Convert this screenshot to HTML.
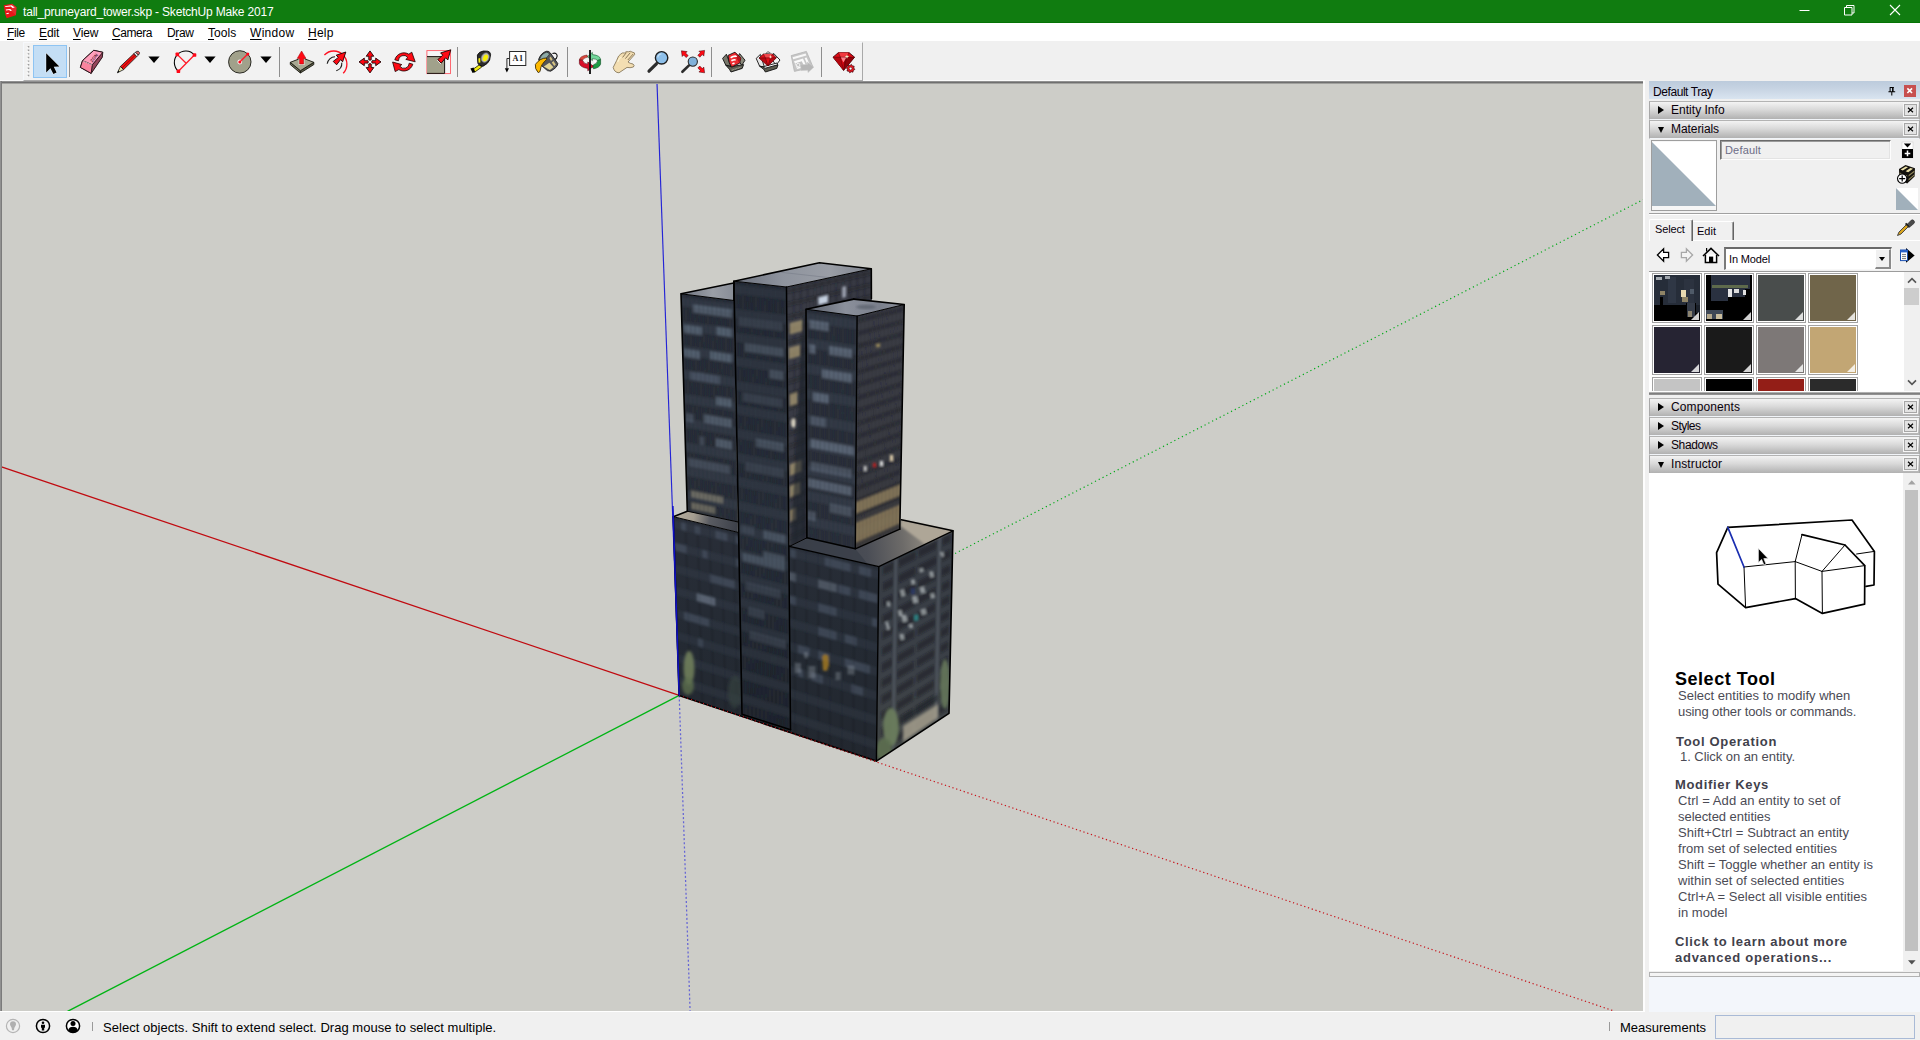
<!DOCTYPE html>
<html>
<head>
<meta charset="utf-8">
<title>tall_pruneyard_tower.skp - SketchUp Make 2017</title>
<style>
html,body{margin:0;padding:0;}
body{width:1920px;height:1040px;overflow:hidden;background:#f0f0f0;position:relative;font-family:"Liberation Sans",sans-serif;font-size:12px;color:#000;}
.abs{position:absolute;}
.t{position:absolute;white-space:nowrap;line-height:14px;font-size:12px;}
#titlebar{left:0;top:0;width:1920px;height:23px;background:#107c10;box-shadow:inset 0 -1px 0 #057405;}
#menubar{left:0;top:23px;width:1920px;height:18px;background:#fff;}
#menubar .t{color:#000;}
#menubar u{text-decoration:underline;text-decoration-thickness:1px;text-underline-offset:1.5px;}
#toolbar{left:23px;top:42px;width:838px;height:37px;background:#f2f2f2;border-top:1px solid #f7f8fb;border-left:1px solid #f5f8fc;border-right:1px solid #a9a9a9;border-bottom:1px solid #acacac;box-sizing:content-box;}
.sep{position:absolute;top:47px;width:1px;height:30px;background:#8e8e8e;}
.dd{position:absolute;top:58px;width:0;height:0;border-left:4.5px solid transparent;border-right:4.5px solid transparent;border-top:5px solid #000;}
#vp{left:0;top:81px;width:1645px;height:931px;background:#cdcdc8;overflow:hidden;}
#status{left:0;top:1012px;width:1920px;height:28px;background:#f0f0f0;}
.bar{position:absolute;left:1649px;width:269px;height:17px;border-left:1px solid #a8a8a8;border-right:1px solid #a8a8a8;border-top:1px solid #b3b3b3;border-bottom:1px solid #f1f4f8;box-sizing:content-box;background:linear-gradient(#f3f3f3 0,#d9d9d9 45%,#b1b1b1 100%);}
.bar .t{left:21px;top:1px;color:#0a000a;}
.bar .x{position:absolute;left:254px;top:1.5px;width:10.5px;height:10px;border:1px solid #a7a7a7;background:#e3e3e3;outline:1px solid #f6f6f6;}
.bar .x svg{position:absolute;left:2px;top:2.5px;}
.tri-r{position:absolute;left:8px;top:4px;width:0;height:0;border-top:4.5px solid transparent;border-bottom:4.5px solid transparent;border-left:6px solid #000;}
.tri-d{position:absolute;left:7.5px;top:5.5px;width:0;height:0;border-left:3.7px solid transparent;border-right:3.7px solid transparent;border-top:6.5px solid #000;}
.sw{position:absolute;width:46px;height:46px;border:1px solid #fff;outline:1px solid #a2a2a2;overflow:hidden;}
.sw i{position:absolute;right:1px;bottom:1px;width:0;height:0;border-left:8px solid transparent;border-bottom:8px solid rgba(255,255,255,.82);}
.ins{position:absolute;white-space:nowrap;font-size:13px;line-height:16px;color:#4b4b55;left:1678px;}
.insb{position:absolute;white-space:nowrap;font-size:13px;line-height:16px;color:#41414b;font-weight:bold;left:1675px;}
svg{position:absolute;overflow:visible;}
</style>
</head>
<body>

<!-- TITLE BAR -->
<div id="titlebar" class="abs">
  <svg style="left:0;top:0" width="22" height="23" viewBox="0 0 22 23">
    <path d="M3.7 5.2 L12 3.7 L16.4 7.15 L15.9 15.2 L6.7 18.2 L5.3 14.8 Z" fill="#e81418"/>
    <path d="M12 3.7 L16.4 7.15 L15.9 15.2 L11.2 11 Z" fill="#e42a2c"/>
    <path d="M5 6.2 L11.5 5.2 L14.8 7.6 L12.5 7.9 L10.85 6.6 L5.3 7.1 Z M5.8 9.5 L10.15 9 L12 10.4 L10.15 10.9 L9.2 9.95 L6 10.5 Z M6.2 13.3 L8.5 12.8 L9.2 13.6 L6.7 14.3 Z" fill="#fff"/>
  </svg>
  <span class="t" id="ttl" style="letter-spacing:-0.187px;left:23px;top:5px;color:#fff;">tall_pruneyard_tower.skp - SketchUp Make 2017</span>
  <svg style="left:1780px;top:0" width="140" height="23" viewBox="0 0 140 23">
    <path d="M19.5 10.5 H29.5" stroke="#fff" stroke-width="1" fill="none"/>
    <path d="M64.5 7.5 H72 V15 H64.5 Z M66.5 7.5 V5.5 H74 V13 H72" stroke="#fff" stroke-width="1" fill="none"/>
    <path d="M110 5 L120 15 M120 5 L110 15" stroke="#fff" stroke-width="1.1" fill="none"/>
  </svg>
</div>
<!-- MENU BAR -->
<div id="menubar" class="abs">
  <span class="t" id="m1" style="letter-spacing:-0.386px;left:7px;top:3px;"><u>F</u>ile</span>
  <span class="t" id="m2" style="letter-spacing:-0.101px;left:39px;top:3px;"><u>E</u>dit</span>
  <span class="t" id="m3" style="letter-spacing:-0.138px;left:73px;top:3px;"><u>V</u>iew</span>
  <span class="t" id="m4" style="letter-spacing:-0.438px;left:112px;top:3px;"><u>C</u>amera</span>
  <span class="t" id="m5" style="letter-spacing:-0.339px;left:167px;top:3px;">D<u>r</u>aw</span>
  <span class="t" id="m6" style="letter-spacing:0.046px;left:208px;top:3px;"><u>T</u>ools</span>
  <span class="t" id="m7" style="letter-spacing:0.303px;left:250px;top:3px;"><u>W</u>indow</span>
  <span class="t" id="m8" style="letter-spacing:0.237px;left:308px;top:3px;"><u>H</u>elp</span>
</div>
<!-- TOOLBAR -->
<div class="abs" style="left:0;top:80px;width:1645px;height:1px;background:#fbfbfb"></div>
<div id="toolbar" class="abs"></div>
<!-- STATUS BAR -->
<div id="status" class="abs">
  <svg style="left:5px;top:6px" width="84" height="16" viewBox="0 0 84 16">
    <circle cx="8" cy="8" r="6.6" fill="none" stroke="#b4b4b4" stroke-width="1.2"/>
    <path d="M8 3.2 a3 3 0 0 1 3 3 c0 1.6 -1.4 2.4 -1.8 4.4 l-0.2 1.6 h-2 l-0.2 -1.6 c-0.4 -2 -1.8 -2.8 -1.8 -4.4 a3 3 0 0 1 3 -3z" fill="#b0b0b0"/>
    <circle cx="38" cy="8" r="6.6" fill="none" stroke="#000" stroke-width="1.5"/>
    <circle cx="38" cy="4.8" r="1.3" fill="#000"/>
    <path d="M36 6.8 h4 v3 h-0.8 v2.6 h-2.4 v-2.6 h-0.8z" fill="#000"/>
    <circle cx="68" cy="8" r="6.6" fill="#fff" stroke="#000" stroke-width="1.5"/>
    <circle cx="68" cy="5.6" r="2.5" fill="#000"/>
    <path d="M63.2 12.4 c0.4 -2.6 2.4 -3.6 4.8 -3.6 s4.4 1 4.8 3.6 c-1.2 1.4 -2.8 2.2 -4.8 2.2 s-3.6 -0.8 -4.8 -2.2z" fill="#000"/>
  </svg>
  <div class="abs" style="left:92px;top:10px;width:1px;height:9px;background:#9a9a9a"></div>
  <span class="t" id="st1" style="letter-spacing:0.033px;left:103px;top:8px;font-size:13px;line-height:16px;">Select objects. Shift to extend select. Drag mouse to select multiple.</span>
  <div class="abs" style="left:1609px;top:10px;width:1px;height:9px;background:#9a9a9a"></div>
  <span class="t" id="st2" style="letter-spacing:0.001px;left:1620px;top:8px;font-size:13px;line-height:16px;">Measurements</span>
  <div class="abs" style="left:1715px;top:3px;width:198px;height:22px;border:1px solid #a9bad6;background:#f0f0f0"></div>
</div>
<!-- ICONS -->
<div class="sep" style="left:69px"></div>
<div class="sep" style="left:279px"></div>
<div class="sep" style="left:457px"></div>
<div class="sep" style="left:567px"></div>
<div class="sep" style="left:711px"></div>
<div class="sep" style="left:821px"></div>
<div class="abs" style="left:33px;top:45px;width:34px;height:33px;background:#c4def5;border:1px solid #8ec4f3;box-sizing:border-box"></div>
<svg style="left:0;top:41px" width="870" height="40" viewBox="0 41 870 40">
<path d="M28.5 46 V78" stroke="#9c9c9c" stroke-width="1.6" stroke-dasharray="1.4 2.2" fill="none"/>
<path d="M27.3 47 V79" stroke="#fdfdfd" stroke-width="1" stroke-dasharray="1.4 2.2" fill="none"/>
<path d="M148.4 56.6 H159.6 L154 62.9 Z" fill="#000"/>
<path d="M204.4 56.6 H215.6 L210 62.9 Z" fill="#000"/>
<path d="M260.4 56.6 H271.6 L266 62.9 Z" fill="#000"/>
<path d="M46.2 53.2 V72.4 L50.4 68.2 L53.4 74 L56.6 72.4 L53.8 66.8 L59.4 66.4 Z" fill="#000" stroke="#f4f8fc" stroke-width="1" stroke-linejoin="round" paint-order="stroke"/>
<g stroke="#1a0a0e" stroke-width="0.9" stroke-linejoin="round"><path d="M93.75 50.3 L102.8 52.3 L102.3 57.2 L91.2 73.4 L80.4 67.4 L82.5 60.6 Z" fill="#96465c"/><path d="M82.5 60.6 L92.3 64.8 L91.2 73.4 L80.4 67.4 Z" fill="#f8849e"/><path d="M93.75 50.3 L102.8 52.3 L92.3 64.8 L82.5 60.6 Z" fill="#ff9fbc"/></g>
<path d="M82.8 61 L92.2 65" stroke="#ffd4e0" stroke-width="0.8"/>
<text transform="translate(92.2 62.6) rotate(-52)" font-family="Liberation Sans,sans-serif" font-weight="bold" font-size="4.4" fill="#5a2436" letter-spacing="0.2">ZON</text>
<g stroke="#1a1a1a" stroke-width="0.8" stroke-linejoin="round"><path d="M117.4 72.8 L120.4 66.4 L123.6 69.6 Z" fill="#e6e2a8"/><path d="M120.4 66.4 L134 53.6 L136.8 56.6 L123.6 69.6 Z" fill="#ee1010"/><path d="M134 53.6 L135.6 52.2 L138.4 55 L136.8 56.6 Z" fill="#f4f4f4"/><path d="M135.6 52.2 L136.6 51.4 Q138.6 50.6 139.4 52.4 Q139.8 53.8 138.4 55 Z" fill="#e26a6a"/></g><path d="M117.4 72.8 L118.4 70.6 L119.6 71.8 Z" fill="#000"/><path d="M122 68 L135.4 55.1" stroke="#8a0000" stroke-width="0.7"/>
<path d="M178.4 71.2 A11.42 11.42 0 1 1 194.4 55" fill="none" stroke="#000" stroke-width="1.1"/>
<path d="M178.4 71.2 L194.4 55 M185.9 63 L177.4 54.6" stroke="#ff1a28" stroke-width="1.3" fill="none"/>
<rect x="176.6" y="69.5" width="3.6" height="3.6" rx="0.9" fill="#ff0818"/>
<rect x="192.7" y="53.2" width="3.6" height="3.6" rx="0.9" fill="#ff0818"/>
<rect x="175.5" y="52.6" width="3.6" height="3.6" rx="0.9" fill="#ff0818"/>
<circle cx="239.8" cy="61.9" r="11.2" fill="#a1a18b" stroke="#2a2a24" stroke-width="1"/>
<circle cx="239.8" cy="62" r="2.4" fill="#fff" opacity=".9"/>
<path d="M239.8 62 L247.8 54" stroke="#ff1a28" stroke-width="1.3"/>
<circle cx="239.8" cy="62" r="1.5" fill="#ff0818"/><circle cx="247.8" cy="54" r="1.5" fill="#ff0818"/>
<g stroke="#16160e" stroke-width="0.9" stroke-linejoin="round"><path d="M290.3 62.3 L300.4 70.7 L300.4 73 L290.3 64.6 Z" fill="#74745e"/><path d="M300.4 70.7 L313.8 62.3 L313.8 64.6 L300.4 73 Z" fill="#5c5c48"/><path d="M290.3 62.3 L302 57.8 L313.8 62.3 L300.4 70.7 Z" fill="#a8a892"/></g>
<path d="M298.6 58 H304.6 V65 H298.6 Z" fill="#f0f0e4" opacity=".8"/>
<path d="M301.6 51 L306 58.4 H303.6 V64 H299.6 V58.4 H297.2 Z" fill="#ff0a14" stroke="#a00008" stroke-width="0.5" stroke-linejoin="round"/>
<path d="M324.4 55 A13 13 0 1 1 343.2 73.2" fill="none" stroke="#ff1020" stroke-width="1.3"/>
<path d="M327.2 63.8 A8 8 0 0 1 335 56.8 M336.3 70.7 A8 8 0 0 0 341.8 62.6" fill="none" stroke="#1a1a1a" stroke-width="1.1"/>
<path d="M345.8 52 L342.6 61.8 L340.6 59.6 L336.6 64.8 L333.2 61.4 L338.4 57.4 L336.2 55.2 Z" fill="#ff0a14" stroke="#1a0000" stroke-width="0.9" stroke-linejoin="round"/>
<path d="M370 49.8 L382.2 61.9 L370 74 L357.8 61.9 Z" fill="#fafafa" opacity=".9"/>
<rect x="365.1" y="57.1" width="2.8" height="2.8" fill="#fff" stroke="#cfd6d6" stroke-width="0.3"/>
<rect x="372.1" y="57.1" width="2.8" height="2.8" fill="#fff" stroke="#cfd6d6" stroke-width="0.3"/>
<rect x="365.1" y="64.1" width="2.8" height="2.8" fill="#fff" stroke="#cfd6d6" stroke-width="0.3"/>
<rect x="372.1" y="64.1" width="2.8" height="2.8" fill="#fff" stroke="#cfd6d6" stroke-width="0.3"/>
<g fill="#ff0510" stroke="#1c0406" stroke-width="0.9" stroke-linejoin="round"><path d="M370 50.9 L373.8 56.2 H371.2 V59.8 Q370 60.6 368.8 59.8 V56.2 H366.2 Z"/><path d="M370 72.9 L373.8 67.6 H371.2 V64 Q370 63.2 368.8 64 V67.6 H366.2 Z"/><path d="M359 61.9 L364.3 58.1 V60.7 H367.9 Q368.7 61.9 367.9 63.1 H364.3 V65.7 Z"/><path d="M381 61.9 L375.7 58.1 V60.7 H372.1 Q371.3 61.9 372.1 63.1 H375.7 V65.7 Z"/></g>
<rect x="369.1" y="61" width="1.8" height="1.8" fill="#fff"/>
<g fill="#ff0a14" stroke="#1a0000" stroke-width="0.8" stroke-linejoin="round"><path d="M394.8 59.8 A9.4 9.4 0 0 1 408.8 54.2 L411.8 52.2 L415.2 61.8 L405.8 59.4 L407.8 57.6 A5.2 5.2 0 0 0 398.4 60.8 Z"/><path d="M412.8 64.2 A9.4 9.4 0 0 1 398.8 69.6 L395.2 71.6 L392.6 62 L401.8 64.6 L399.8 66.2 A5.2 5.2 0 0 0 409.2 63.2 Z"/></g>
<rect x="426.9" y="50.6" width="23.6" height="23" fill="#f6f6f6" stroke="#ff5a64" stroke-width="0.9"/>
<path d="M427 56.6 H444.6 V73.4 H427 Z" fill="#a1a18b"/><path d="M427 56.6 H444.6 V73.4 H427" fill="none" stroke="#1c1410" stroke-width="1"/>
<path d="M450.8 49.8 L447.8 60 L445.6 57.8 L441.2 63.2 L437.8 59.6 L442.8 55.2 L440.6 52.9 Z" fill="#ff0a14" stroke="#1a0000" stroke-width="0.9" stroke-linejoin="round"/>
<path d="M437.2 60.2 L441 64" stroke="#f4f4f4" stroke-width="0.9"/>
<path d="M479.6 64.6 L472.6 69.6 L474.6 72.2 L481.8 67 Z" fill="#f4ec10" stroke="#1a1a00" stroke-width="0.8"/>
<path d="M470.4 68.4 L473.6 67.6 L475.2 72 L472.6 73 Z" fill="#000"/>
<path d="M477.4 55 Q479 51.6 483.4 51 L488 51.2 Q490.6 52 490.6 54.6 L489.6 60.2 Q488 63.8 482.8 66.4 L479.8 65.6 Q477.2 64 477.6 60 Z" fill="#2a2a2a" stroke="#000" stroke-width="0.8"/>
<path d="M478.4 58.6 L480.2 58 L480.4 62.4 L478.6 62.8 Z" fill="#f4ec10"/>
<ellipse cx="485.2" cy="57.6" rx="3.8" ry="5" transform="rotate(28 485.2 57.6)" fill="#b4b4b4" stroke="#6a6a6a" stroke-width="0.6"/>
<ellipse cx="485.4" cy="57.8" rx="2.3" ry="3.5" transform="rotate(28 485.4 57.8)" fill="#f6ee08"/>
<rect x="509.6" y="51.5" width="16.2" height="14" fill="#fff" stroke="#2a2a2a" stroke-width="1"/>
<text x="512.6" y="60.8" font-family="Liberation Serif,serif" font-weight="bold" font-size="8.2" fill="#1a1a1a" letter-spacing="0.4">A1</text>
<path d="M509.6 58.5 H506.9 V68.6" fill="none" stroke="#2a2a2a" stroke-width="1"/>
<path d="M504.8 68.2 H509 L506.9 72.6 Z" fill="#000"/>
<path d="M552.4 53.6 Q556.8 52 557.2 56 Q557 58.6 554.4 59.8" fill="none" stroke="#111" stroke-width="1.1"/>
<path d="M538.6 59.4 Q541 52.6 546.8 51.2 Q549.2 51.2 550.4 53 L557.8 63.6 Q557.6 67.4 550.6 71.2 L547.4 70.6 L541.4 65.4 Z" fill="#55565a" stroke="#1a1a1a" stroke-width="0.9" stroke-linejoin="round"/>
<path d="M539.4 59.6 Q541.4 53.6 546.6 52.2 Q549 52.4 549.4 54.2 Q547.6 58 542.6 60.4 Z" fill="#8eaaa6" stroke="#23282a" stroke-width="0.7"/>
<path d="M543.8 66.4 L549.4 62.8 L553.4 67.2 L549.8 70 Z" fill="#e2d494"/><path d="M550.6 56.6 L552.6 59.6 L551 61 L549.4 58 Z M553.4 61 L555.8 64.4 L554.2 66 L551.8 62.6 Z" fill="#d4c282"/>
<path d="M546.4 58 Q540 58 535.4 64.4 Q534.6 68.6 538.2 72.6 Q540.2 72.4 540.4 70 Q540.6 64.6 546.8 59.4 Z" fill="#fdb900" stroke="#2a1c00" stroke-width="0.8" stroke-linejoin="round"/>
<path d="M600.6 59.6 Q600.4 55.4 592.4 54.6 L592.4 52.4 L587.4 56.8 L592.4 60.6 L592.4 58.6 Q596 58.8 597.6 60.4 Z" fill="#72d69a" stroke="#1a5a30" stroke-width="0.6"/>
<path d="M600.6 59.6 L600.6 64 Q599.6 67.6 593.6 68.8 L592 66.4 L594 64.6 Q597.4 63.6 597.6 60.4 Z" fill="#1d9c44" stroke="#0a4a20" stroke-width="0.6"/>
<path d="M579.4 59.8 Q580 56 587 55 L587.6 57 Q583.4 58 582.6 60.2 Z" fill="#d8483c" stroke="#6a1010" stroke-width="0.5"/>
<path d="M579.4 59.8 L579.4 63.6 Q580.4 67.4 587.8 68.4 L587.8 70.8 L593.4 66.2 L587.8 62 L587.8 64.2 Q583.6 63.8 582.6 60.4 Z" fill="#d90f2a" stroke="#5a0010" stroke-width="0.6"/>
<path d="M583.4 60.6 L587 59.4 L585.6 61.2 L588 62.2 Z M594 60.6 L597 61.2 L594.4 62.4 Z" fill="#fff"/>
<path d="M590 50 V74" stroke="#0a0a0a" stroke-width="1.8"/>
<path d="M613.2 67.4 L616.6 60.6 Q618.4 55 620.8 54 Q622.4 52.4 624.4 53 Q626 51 628.4 51.8 Q630.4 50.6 632 52 Q635.4 52.4 634.6 54.6 L628 62 Q630 63.6 633 64 Q635 65.4 633.4 67 Q630 68.2 627 67.4 L619 72.8 Q614.4 72.6 613.2 67.4 Z" fill="#f3deb2" stroke="#6a5a3c" stroke-width="0.7" stroke-linejoin="round"/>
<path d="M622.6 57.4 L626.4 52.6 M625.4 58.6 L630.2 52.8 M627.8 60 L633.2 54" stroke="#5a4a30" stroke-width="0.7" fill="none"/>
<path d="M617.6 62 Q619 58 621.4 57" stroke="#fffbe0" stroke-width="1.2" fill="none" opacity=".8"/>
<path d="M656.4 63.8 L649 71.2" stroke="#2c2c2c" stroke-width="3.2" stroke-linecap="round"/>
<circle cx="661.6" cy="57.8" r="6.2" fill="#8ec0ea" stroke="#1e1e1e" stroke-width="1.4"/>
<path d="M657.8 57.4 A4 4 0 0 1 661.4 53.8" stroke="#c4e0f6" stroke-width="1.2" fill="none"/>
<path d="M689 65.4 L682.4 71.8" stroke="#2c2c2c" stroke-width="2.6" stroke-linecap="round"/>
<circle cx="692.8" cy="61.6" r="4.6" fill="#82b2da" stroke="#2a2a2a" stroke-width="1.1"/>
<path d="M681.4 50.8 L687.1 51.6 L685.6 53.1 L688.2 55.6 L686.2 57.6 L683.7 55.0 L682.2 56.5Z" fill="#ff0a14" stroke="#3a0008" stroke-width="0.5" stroke-linejoin="round"/>
<path d="M704.6 50.4 L703.8 56.1 L702.3 54.6 L699.8 57.2 L697.8 55.2 L700.4 52.7 L698.9 51.2Z" fill="#ff0a14" stroke="#3a0008" stroke-width="0.5" stroke-linejoin="round"/>
<path d="M704.6 72.8 L698.9 72.0 L700.4 70.5 L697.8 68.0 L699.8 66.0 L702.3 68.6 L703.8 67.1Z" fill="#ff0a14" stroke="#3a0008" stroke-width="0.5" stroke-linejoin="round"/>
<g stroke="#111" stroke-width="0.9" stroke-linejoin="round"><path d="M722.6 58.4 L726.4 54.2 L731 66.4 L725.8 65.2 Z" fill="#77776a"/><path d="M739.6 53.6 L745 60.2 L741.8 65.4 L737.2 58.6 Z" fill="#8a8a7c"/><path d="M725.8 65.2 L731 66.6 L743.6 64.6 L742.2 68.4 L731 72 L729.4 69.2 Z" fill="#5c5c50"/><path d="M728 55.4 L735 52.2 L740.8 58 L739.6 63.2 L731.6 67.2 L729.2 62.6 Z" fill="#ee2a30"/></g><path d="M735 52.2 L740.8 58 L739.6 63.2 L737 59 Z" fill="#b8141c"/><path d="M730.2 57 Q733 55 736.4 55.4 L737.2 57 Q734 56.6 731 58.4 Z M731 60 Q733.4 58.6 735.4 59 L736 60.6 Q734 60.4 731.8 61.6 Z M732 63.2 Q733.2 62.4 734.4 62.6 L734.8 64 Q733.6 64 732.6 64.6 Z" fill="#fff"/><path d="M731.4 70.2 L741.4 67 M732.4 70.8 l1.2 -1.6 M735.4 69.8 l1.2 -1.6 M738.4 68.8 l1.2 -1.6" stroke="#a0a090" stroke-width="0.6"/>
<g stroke="#111" stroke-width="0.9" stroke-linejoin="round"><path d="M756.2 58.4 L760.4 54.4 L764.4 67 L759.6 66.2 Z" fill="#e6e6e6"/><path d="M773.6 53.4 L780 60 L776 65.2 L771.4 58.6 Z" fill="#f6f6f6"/><path d="M759.6 66.2 L764.4 67 L778 64.8 L776.8 68.4 L765.4 72 L763.6 69.2 Z" fill="#5c5c50"/><path d="M763.6 66.6 L777 63 L777.6 64.8 L764.6 68.4 Z" fill="#fff"/></g><path d="M768 51.4 L770.4 53 L765.6 53.6 Z" fill="#c8c8c8" stroke="#333" stroke-width="0.5"/><path d="M759 58 L763.4 54 L772.6 54 L776.4 57.8 L768 66 Z" fill="#e01018" stroke="#3a0004" stroke-width="0.7" stroke-linejoin="round"/><path d="M763.4 54 L772.6 54 L770.6 57.6 L765.4 57.8 Z" fill="#f0474c"/><path d="M759 58 L765.4 57.8 L768 66 Z M776.4 57.8 L770.6 57.6 L768 66 Z" fill="#a80810" opacity=".75"/><path d="M759 58 L776.4 57.8 M763.4 54 L765.4 57.8 L768 66 L770.6 57.6 L772.6 54" stroke="#5a0008" stroke-width="0.5" fill="none"/><path d="M770.6 55 l0.5 1.4 l1.4 0.5 l-1.4 0.5 l-0.5 1.4 l-0.5 -1.4 l-1.4 -0.5 l1.4 -0.5z" fill="#ffe8d0"/>
<path d="M791.2 55.6 L806.4 51.4 L813 67 L794.4 71.4 Z" fill="#c6c6c6" stroke="#b4b4b4" stroke-width="0.8"/>
<path d="M792.6 57.2 L805.6 53.6 L806.4 55.4 L793.2 59.2 Z" fill="#f8f8f8"/><path d="M794 61.2 L803 58.6 L806.4 66.4 L797.2 69 Z" fill="#fafafa"/><path d="M795.4 63.2 L801.8 61.2 L803.8 65.6 L797.2 67.6 Z" fill="#c2c2c2"/><path d="M804.6 58 L806.6 57.4 L809.8 64.8 L807.8 65.4 Z" fill="#fafafa"/><circle cx="798.2" cy="65" r="1.7" fill="none" stroke="#f6f6f6" stroke-width="0.9"/>
<path d="M800.6 64.8 L807.4 64.4 L807.2 62 L813.8 67.2 L808 72.6 L807.8 70.2 L801 70.6 Z" fill="#b6b6b6" stroke="#c8c8c8" stroke-width="0.5"/>
<path d="M833 57.2 L838.4 52.6 L849 52.6 L854.6 57.2 L843.6 70.4 Z" fill="#e00a14" stroke="#2a0004" stroke-width="0.8" stroke-linejoin="round"/><path d="M838.4 52.6 L849 52.6 L846.8 56.8 L840.4 57 Z" fill="#f2383e"/><path d="M840.4 57 L846.8 56.8 L843.6 62.6 Z" fill="#ff808a"/><path d="M833 57.2 L840.4 57 L843.6 70.4 Z" fill="#b4060e"/><path d="M843.6 62.6 L846.8 56.8 L854.6 57.2 L843.6 70.4 Z" fill="#7a0008" opacity=".8"/><path d="M833 57.2 L854.6 57.2 M838.4 52.6 L840.4 57 L843.6 70.4 L846.8 56.8 L849 52.6" stroke="#5a0008" stroke-width="0.5" fill="none"/><path d="M847 54.4 l0.6 1.6 l1.6 0.6 l-1.6 0.6 l-0.6 1.6 l-0.6 -1.6 l-1.6 -0.6 l1.6 -0.6z" fill="#f4f0c8"/>
<path d="M854.82 69.44 L853.26 70.38 L852.99 72.18 L851.22 71.74 L849.76 72.82 L848.82 71.26 L847.02 70.99 L847.46 69.22 L846.38 67.76 L847.94 66.82 L848.21 65.02 L849.98 65.46 L851.44 64.38 L852.38 65.94 L854.18 66.21 L853.74 67.98Z" fill="#e81820" stroke="#3a0008" stroke-width="0.7" stroke-linejoin="round"/><circle cx="850.6" cy="68.6" r="1.4" fill="#fff" stroke="#3a0008" stroke-width="0.5"/>
</svg>

<!-- VIEWPORT -->
<div id="vp" class="abs">
<svg style="left:0;top:0" width="1645" height="931" viewBox="0 81 1645 931">
<defs>
<linearGradient id="gAf" x1="0" y1="0" x2="0" y2="1"><stop offset="0" stop-color="#292e38"/><stop offset="1" stop-color="#2b3039"/></linearGradient>
<linearGradient id="gBf" x1="0" y1="0" x2="0" y2="1"><stop offset="0" stop-color="#262b35"/><stop offset=".55" stop-color="#292f39"/><stop offset="1" stop-color="#20252d"/></linearGradient>
<linearGradient id="gBr" x1="0" y1="0" x2="1" y2="0"><stop offset="0" stop-color="#393b45"/><stop offset="1" stop-color="#363842"/></linearGradient>
<linearGradient id="gCf" x1="0" y1="0" x2="0" y2="1"><stop offset="0" stop-color="#2a2f39"/><stop offset="1" stop-color="#2c313b"/></linearGradient>
<linearGradient id="gCr" x1="0" y1="0" x2="0" y2="1"><stop offset="0" stop-color="#3a3c45"/><stop offset=".7" stop-color="#383a42"/><stop offset="1" stop-color="#3c3a3a"/></linearGradient>
<linearGradient id="gPf" x1="0" y1="0" x2="0" y2="1"><stop offset="0" stop-color="#292e38"/><stop offset=".5" stop-color="#242a33"/><stop offset="1" stop-color="#22272f"/></linearGradient>
<linearGradient id="gPr" x1="0" y1="0" x2="0" y2="1"><stop offset="0" stop-color="#363b43"/><stop offset=".6" stop-color="#3b4047"/><stop offset="1" stop-color="#414545"/></linearGradient>
<linearGradient id="gTopB" x1="734" y1="281" x2="871" y2="269" gradientUnits="userSpaceOnUse"><stop offset="0" stop-color="#6b707c"/><stop offset=".35" stop-color="#8e939d"/><stop offset=".7" stop-color="#9a9ea6"/><stop offset="1" stop-color="#7d828c"/></linearGradient>
<linearGradient id="gTopC" x1="806" y1="309" x2="904" y2="305" gradientUnits="userSpaceOnUse"><stop offset="0" stop-color="#5a606c"/><stop offset=".4" stop-color="#8b909b"/><stop offset=".75" stop-color="#7b808c"/><stop offset="1" stop-color="#8d929c"/></linearGradient>
<linearGradient id="gTopA" x1="681" y1="294" x2="734" y2="290" gradientUnits="userSpaceOnUse"><stop offset="0" stop-color="#6e737e"/><stop offset=".6" stop-color="#9a9ea6"/><stop offset="1" stop-color="#888d97"/></linearGradient>
<linearGradient id="gPtL" x1="674" y1="516" x2="738" y2="528" gradientUnits="userSpaceOnUse"><stop offset="0" stop-color="#b5ae9f"/><stop offset=".3" stop-color="#a49d90"/><stop offset=".55" stop-color="#5a5c62"/><stop offset="1" stop-color="#3c4049"/></linearGradient>
<linearGradient id="gPtR" x1="800" y1="545" x2="945" y2="528" gradientUnits="userSpaceOnUse"><stop offset="0" stop-color="#3a3e47"/><stop offset=".45" stop-color="#4a4d55"/><stop offset=".7" stop-color="#6d6b69"/><stop offset="1" stop-color="#a8a091"/></linearGradient>
<clipPath id="cPf"><polygon points="673.3,516.7 878.8,566.7 876.4,761.1 679.1,695.5"/></clipPath><clipPath id="cPr"><polygon points="878.8,566.7 953.0,530.8 949.0,713.4 876.4,761.1"/></clipPath><clipPath id="cAf"><polygon points="681.0,293.8 734.0,300.5 737.7,521.9 687.3,511.2"/></clipPath><clipPath id="cBf"><polygon points="733.9,281.2 786.5,287.0 790.5,729.8 742.0,714.2"/></clipPath><clipPath id="cBr"><polygon points="786.5,287.0 871.3,268.8 874.0,505.0 789.4,546.4"/></clipPath><clipPath id="cCf"><polygon points="806.0,309.2 857.1,316.0 855.3,548.8 806.9,537.8"/></clipPath><clipPath id="cCr"><polygon points="857.1,316.0 904.2,304.5 899.8,529.2 855.3,548.8"/></clipPath>
<filter id="bl" x="-5%" y="-5%" width="110%" height="110%"><feGaussianBlur stdDeviation="0.9"/></filter>
<filter id="bl2" x="-20%" y="-20%" width="140%" height="140%"><feGaussianBlur stdDeviation="1.6"/></filter>
</defs>
<path d="M1.5 466.8 L679.2 695.4" stroke="#c00a10" stroke-width="1.3" fill="none" opacity="1"/>
<path d="M679.2 695.4 L1613.5 1010.8" stroke="#c8141c" stroke-width="1.2" stroke-dasharray="1.25 2.7" fill="none" opacity="1"/>
<path d="M679.2 695.4 L67.5 1011.3" stroke="#00b414" stroke-width="1.3" fill="none" opacity="1"/>
<path d="M679.2 695.4 L1644 199.2" stroke="#00aa18" stroke-width="1.2" stroke-dasharray="1.2 3.05" fill="none" opacity="1"/>
<path d="M657 83 L679.2 695.4" stroke="#2424d6" stroke-width="1.15" fill="none" opacity="1"/>
<path d="M679.2 695.4 L690.1 1011.5" stroke="#6464d6" stroke-width="1.25" stroke-dasharray="2 2.2" fill="none" opacity="1"/>
<g>
<polygon points="673.3,516.7 878.8,566.7 876.4,761.1 679.1,695.5" fill="url(#gPf)"/>
<polygon points="878.8,566.7 953.0,530.8 949.0,713.4 876.4,761.1" fill="url(#gPr)"/>
<g clip-path="url(#cPf)"><g filter="url(#bl)">
<path d="M673.4 520.1 L878.7 570.3 L878.6 579.1 L673.7 528.1ZM674.1 542.4 L878.4 594.6 L878.3 603.4 L674.4 550.4ZM674.9 564.8 L878.1 618.9 L878.0 627.7 L675.1 572.8ZM675.6 587.1 L877.8 643.2 L877.7 652.0 L675.8 595.1ZM676.3 609.5 L877.5 667.5 L877.4 676.3 L676.6 617.5ZM677.0 631.8 L877.2 691.8 L877.1 700.6 L677.3 639.8ZM677.8 654.2 L876.9 716.1 L876.8 724.9 L678.0 662.2ZM678.5 676.5 L876.6 740.4 L876.5 749.2 L678.7 684.5Z" fill="#51607326"/>
<path d="M681.1 521.9 L686.3 523.2 L686.5 531.3 L681.3 530.0ZM694.8 525.3 L700.0 526.6 L700.2 534.7 L695.0 533.4ZM715.3 530.3 L727.3 533.3 L727.5 541.5 L715.5 538.5ZM735.8 535.3 L761.5 541.6 L761.7 550.0 L736.0 543.6ZM790.6 548.8 L795.8 550.0 L795.8 558.5 L790.6 557.2ZM824.8 557.1 L850.5 563.4 L850.5 572.1 L824.8 565.7ZM859.0 565.5 L871.0 568.5 L870.9 577.2 L858.9 574.2ZM675.0 542.6 L686.9 545.7 L687.2 553.8 L675.2 550.7ZM702.2 549.6 L707.4 550.9 L707.6 559.1 L702.4 557.7ZM736.2 558.3 L748.2 561.3 L748.3 569.6 L736.4 566.5ZM770.3 567.0 L775.5 568.3 L775.5 576.7 L770.4 575.4ZM838.4 584.4 L850.4 587.5 L850.3 596.1 L838.3 593.0ZM858.8 589.6 L877.6 594.4 L877.5 603.2 L858.7 598.3ZM709.5 574.0 L735.0 580.8 L735.2 589.0 L709.7 582.2ZM743.4 583.0 L762.1 588.0 L762.2 596.4 L743.6 591.3ZM770.5 590.3 L796.0 597.1 L796.0 605.5 L770.6 598.6ZM818.0 602.9 L836.7 607.9 L836.6 616.5 L818.0 611.4ZM872.2 617.4 L877.3 618.7 L877.2 627.5 L872.1 626.1ZM696.6 592.9 L715.2 598.1 L715.4 606.3 L696.8 601.1ZM764.0 611.7 L789.4 618.7 L789.4 627.1 L764.1 620.0ZM818.0 626.6 L836.6 631.8 L836.5 640.4 L818.0 635.2ZM844.9 634.1 L856.8 637.4 L856.7 646.1 L844.9 642.7ZM683.8 611.6 L709.0 618.9 L709.2 627.1 L684.1 619.7ZM777.7 638.7 L789.5 642.1 L789.6 650.6 L777.8 647.1ZM797.8 644.5 L809.7 647.9 L809.7 656.5 L797.9 653.0ZM818.0 650.3 L829.8 653.8 L829.8 662.3 L818.0 658.9ZM844.8 658.1 L870.0 665.4 L869.9 674.1 L844.8 666.7ZM697.9 638.0 L702.9 639.6 L703.1 647.7 L698.1 646.2ZM771.3 660.1 L783.0 663.6 L783.1 672.0 L771.4 668.4ZM798.0 668.1 L803.0 669.6 L803.1 678.1 L798.0 676.5ZM811.3 672.1 L823.0 675.6 L823.0 684.2 L811.3 680.6ZM851.3 684.1 L863.1 687.6 L863.0 696.3 L851.3 692.7Z" fill="#7d8fa638"/>
<path d="M777.1 568.7 L795.9 573.5 L795.9 582.0 L777.2 577.1ZM817.9 579.2 L836.7 584.0 L836.7 592.6 L817.9 587.7ZM777.3 592.1 L782.5 593.4 L782.5 601.9 L777.4 600.5ZM696.6 592.9 L715.2 598.1 L715.4 606.3 L696.8 601.1Z" fill="#a9b7c640"/>
<path d="M685.4 519.6 L690.7 699.4M697.5 522.6 L702.3 703.2M709.6 525.5 L713.9 707.1M721.6 528.5 L725.5 710.9M733.7 531.4 L737.1 714.8M745.8 534.3 L748.7 718.7M757.9 537.3 L760.3 722.5M770.0 540.2 L771.9 726.4M782.1 543.2 L783.6 730.2M794.2 546.1 L795.2 734.1M806.2 549.1 L806.8 737.9M818.3 552.0 L818.4 741.8M830.4 554.9 L830.0 745.7M842.5 557.9 L841.6 749.5M854.6 560.8 L853.2 753.4M866.7 563.8 L864.8 757.2" stroke="#161c25" stroke-width="0.7" opacity=".4" fill="none"/>
<path d="M822 656 l3 -2 l3.4 1.6 l0.6 9 l-2 6.4 l-4 -0.6 z" fill="#a87c20" opacity=".8"/>
<rect x="795.0" y="663.0" width="6" height="10" fill="#aab3bc" opacity=".3"/>
<rect x="808.5" y="666.0" width="7" height="12" fill="#aab3bc" opacity=".3"/>
<rect x="847.5" y="665.5" width="7" height="9" fill="#aab3bc" opacity=".3"/>
<rect x="835.5" y="672.0" width="5" height="8" fill="#aab3bc" opacity=".3"/>
<rect x="804.0" y="652.0" width="4" height="6" fill="#aab3bc" opacity=".3"/>
</g><g filter="url(#bl2)">
<ellipse cx="689" cy="668" rx="5.5" ry="17" fill="#74845e" opacity=".85"/>
<ellipse cx="688" cy="686" rx="6" ry="9" fill="#5c6e4e" opacity=".8"/>
<ellipse cx="735" cy="692" rx="7" ry="16" fill="#36443f" opacity=".6"/>
<ellipse cx="781" cy="714" rx="8" ry="16" fill="#33413c" opacity=".6"/>
<path d="M742 640 q20 -8 44 4 l0 12 q-24 -8 -44 -2z" fill="#3e4a4a" opacity=".6"/>
</g></g>
<g clip-path="url(#cPr)"><g filter="url(#bl)">
<path d="M883.2 567.0 L893.6 561.9 L893.5 569.9 L883.1 575.0ZM883.0 583.1 L893.3 577.9 L893.2 585.9 L882.9 591.2ZM882.8 599.2 L893.1 593.9 L893.0 601.9 L882.7 607.3ZM882.6 615.4 L892.9 609.9 L892.8 617.9 L882.5 623.5ZM882.4 631.5 L892.7 625.9 L892.6 633.9 L882.3 639.6ZM882.2 647.7 L892.4 641.9 L892.3 649.9 L882.1 655.7ZM881.9 663.8 L892.2 657.9 L892.1 665.9 L881.8 671.9ZM881.7 680.0 L892.0 673.9 L891.9 681.9 L881.6 688.0ZM881.5 696.1 L891.8 689.9 L891.7 697.9 L881.4 704.2ZM881.3 712.2 L891.6 706.0 L891.4 714.0 L881.2 720.3ZM881.1 728.4 L891.3 722.0 L891.2 730.0 L881.0 736.4ZM880.9 744.5 L891.1 738.0 L891.0 746.0 L880.8 752.6ZM898.8 559.4 L915.8 551.1 L915.7 559.0 L898.6 567.4ZM898.5 575.3 L915.6 566.8 L915.4 574.7 L898.4 583.3ZM898.3 591.3 L915.3 582.5 L915.2 590.4 L898.2 599.2ZM898.1 607.2 L915.0 598.2 L914.9 606.1 L897.9 615.2ZM897.8 623.1 L914.8 613.9 L914.6 621.8 L897.7 631.1ZM897.6 639.1 L914.5 629.6 L914.4 637.5 L897.5 647.0ZM897.4 655.0 L914.2 645.4 L914.1 653.2 L897.2 663.0ZM897.1 670.9 L914.0 661.1 L913.9 668.9 L897.0 678.9ZM896.9 686.9 L913.7 676.8 L913.6 684.6 L896.8 694.8ZM896.7 702.8 L913.5 692.5 L913.3 700.3 L896.5 710.8ZM896.4 718.7 L913.2 708.2 L913.1 716.0 L896.3 726.7ZM896.2 734.7 L912.9 723.9 L912.8 731.8 L896.1 742.6ZM918.8 549.7 L936.6 541.0 L936.5 548.7 L918.7 557.5ZM918.5 565.3 L936.3 556.4 L936.2 564.2 L918.4 573.2ZM918.3 581.0 L936.0 571.9 L935.9 579.6 L918.1 588.8ZM918.0 596.7 L935.7 587.3 L935.6 595.0 L917.9 604.5ZM917.7 612.3 L935.4 602.7 L935.3 610.5 L917.6 620.2ZM917.5 628.0 L935.1 618.2 L935.0 625.9 L917.3 635.8ZM917.2 643.7 L934.8 633.6 L934.6 641.3 L917.0 651.5ZM916.9 659.3 L934.5 649.0 L934.3 656.8 L916.8 667.2ZM916.6 675.0 L934.2 664.5 L934.0 672.2 L916.5 682.9ZM916.4 690.7 L933.9 679.9 L933.7 687.6 L916.2 698.5ZM916.1 706.4 L933.6 695.3 L933.4 703.1 L916.0 714.2ZM915.8 722.0 L933.3 710.8 L933.1 718.5 L915.7 729.9ZM942.6 538.1 L950.7 534.2 L950.6 541.8 L942.4 545.8ZM942.2 553.5 L950.4 549.4 L950.2 557.0 L942.1 561.2ZM941.9 568.8 L950.1 564.7 L949.9 572.3 L941.8 576.5ZM941.6 584.2 L949.7 579.9 L949.6 587.5 L941.5 591.9ZM941.3 599.5 L949.4 595.1 L949.2 602.8 L941.1 607.2ZM941.0 614.9 L949.1 610.4 L948.9 618.0 L940.8 622.6ZM940.7 630.3 L948.7 625.6 L948.6 633.3 L940.5 637.9ZM940.4 645.6 L948.4 640.9 L948.3 648.5 L940.2 653.3ZM940.0 661.0 L948.1 656.1 L947.9 663.8 L939.9 668.6ZM939.7 676.3 L947.8 671.4 L947.6 679.0 L939.6 684.0ZM939.4 691.7 L947.4 686.6 L947.3 694.2 L939.3 699.3ZM939.1 707.0 L947.1 701.9 L946.9 709.5 L938.9 714.7Z" fill="#1c2026" opacity=".6"/>
<path d="M895.8 558.4 L893.1 750.1 M939.6 537.3 L935.9 722.0" stroke="#5c646e" stroke-width="1.3" fill="none"/>
<rect x="900.7" y="589.5" width="4" height="7" fill="#c4c9cc" opacity=".62" transform="rotate(-14 902.7 593.0)"/>
<rect x="898.2" y="610.2" width="4" height="6" fill="#c4c9cc" opacity=".62" transform="rotate(-14 900.2 613.2)"/>
<rect x="902.0" y="614.9" width="5" height="7" fill="#c4c9cc" opacity=".62" transform="rotate(-14 904.5 618.4)"/>
<rect x="900.0" y="633.8" width="4" height="6" fill="#c4c9cc" opacity=".62" transform="rotate(-14 902.0 636.8)"/>
<rect x="911.1" y="579.4" width="4" height="5" fill="#c4c9cc" opacity=".62" transform="rotate(-14 913.1 581.9)"/>
<rect x="912.5" y="596.1" width="5" height="7" fill="#c4c9cc" opacity=".62" transform="rotate(-14 915.0 599.6)"/>
<rect x="920.0" y="587.1" width="5" height="6" fill="#c4c9cc" opacity=".62" transform="rotate(-14 922.5 590.1)"/>
<rect x="921.1" y="608.8" width="5" height="6" fill="#c4c9cc" opacity=".62" transform="rotate(-14 923.6 611.8)"/>
<rect x="929.6" y="571.3" width="4" height="6" fill="#c4c9cc" opacity=".62" transform="rotate(-14 931.6 574.3)"/>
<rect x="930.6" y="593.3" width="4" height="5" fill="#c4c9cc" opacity=".62" transform="rotate(-14 932.6 595.8)"/>
<rect x="886.1" y="621.7" width="3" height="8" fill="#c4c9cc" opacity=".62" transform="rotate(-14 887.6 625.7)"/>
<rect x="887.1" y="601.6" width="3" height="5" fill="#c4c9cc" opacity=".62" transform="rotate(-14 888.6 604.1)"/>
<rect x="908.9" y="624.2" width="4" height="4" fill="#c4c9cc" opacity=".62" transform="rotate(-14 910.9 626.2)"/>
<rect x="940.7" y="551.8" width="3" height="5" fill="#c4c9cc" opacity=".62" transform="rotate(-14 942.2 554.3)"/>
<rect x="919.4" y="568.3" width="4" height="4" fill="#c4c9cc" opacity=".62" transform="rotate(-14 921.4 570.3)"/>
<rect x="914.2" y="614.7" width="4" height="6" fill="#2c8a8a" opacity=".85"/>
<rect x="911.0" y="588.4" width="4" height="6" fill="#2a3a66" opacity=".85"/>
</g><g filter="url(#bl2)">
<path d="M903 742 L938 718 L938 704 L903 726 Z" fill="#a09a8a" opacity=".9"/>
<path d="M903 722 L938 700 L938 694 L903 716 Z" fill="#23272d" opacity=".7"/>
<ellipse cx="891" cy="727" rx="8" ry="19" fill="#6a7c5c" opacity=".95"/>
<ellipse cx="884" cy="750" rx="8" ry="12" fill="#5c6e50" opacity=".95"/>
<ellipse cx="945" cy="684" rx="5" ry="25" fill="#62745a" opacity=".95"/>
</g></g>
<polygon points="673.3,516.7 687.3,511.25 737.7,521.9 737.7,532.3" fill="url(#gPtL)"/>
<polygon points="789.4,546.4 806.9,537.8 855.3,548.75 899.8,529.2 901.4,519.8 953,530.8 878.75,566.7" fill="url(#gPtR)"/>
<polygon points="901.4,519.8 953,530.8 925,544.3 900.5,526" fill="#aea697" filter="url(#bl)"/>
<polygon points="789.4,546.4 806.9,537.8 855.3,548.75 868,564.2" fill="#3a3f49" opacity=".8"/>
<polygon points="681.0,293.8 734.0,300.5 737.7,521.9 687.3,511.2" fill="url(#gAf)"/>
<g clip-path="url(#cAf)"><g filter="url(#bl)">
<path d="M681.1 297.4 L734.1 304.2 L734.2 313.0 L681.4 306.1ZM681.8 321.5 L734.5 328.8 L734.6 337.6 L682.1 330.2ZM682.5 345.7 L734.9 353.4 L735.0 362.2 L682.8 354.4ZM683.2 369.9 L735.3 378.0 L735.4 386.8 L683.5 378.6ZM683.9 394.0 L735.7 402.6 L735.9 411.4 L684.2 402.7ZM684.6 418.2 L736.1 427.2 L736.3 436.0 L684.9 426.9ZM685.3 442.4 L736.5 451.8 L736.7 460.6 L685.6 451.1ZM686.0 466.5 L736.9 476.4 L737.1 485.2 L686.3 475.2ZM686.7 490.7 L737.4 501.0 L737.5 509.8 L687.0 499.4Z" fill="#54647a30"/>
<path d="M692.8 304.2 L732.0 309.3 L732.1 317.9 L693.0 312.6ZM683.8 324.5 L701.9 327.0 L702.1 335.5 L684.1 332.9ZM715.9 326.6 L731.9 328.8 L732.1 337.4 L716.1 335.1ZM683.8 348.6 L699.9 351.0 L700.1 359.4 L684.1 357.0ZM709.9 351.1 L732.0 354.4 L732.1 362.9 L710.1 359.6ZM715.9 396.4 L731.9 399.0 L732.1 407.6 L716.1 404.9ZM703.8 414.3 L732.0 419.2 L732.1 427.7 L704.0 422.8ZM715.9 438.3 L731.9 441.2 L732.1 449.7 L716.1 446.8Z" fill="#7f90a4" opacity=".45"/>
<path d="M696.9 372.2 L703.9 373.3 L704.1 381.8 L697.1 380.7ZM685.9 413.1 L693.9 414.5 L694.1 422.9 L686.1 421.5ZM699.9 436.4 L703.9 437.1 L704.1 445.6 L700.1 444.9ZM687.8 457.7 L730.0 465.8 L730.2 474.3 L688.0 466.2ZM689.8 371.4 L720.0 376.1 L720.1 384.6 L690.1 379.8Z" fill="#7f90a4" opacity=".3"/>
<path d="M690.8 490.2 L723.0 496.8 L723.1 503.8 L691.0 497.2ZM690.8 502.0 L715.0 507.0 L715.1 514.0 L691.0 509.0Z" fill="#a89f86" opacity=".5"/>
<path d="M685.4 294.3 L691.5 512.1M689.8 294.9 L695.7 513.0M694.2 295.4 L699.9 513.9M698.7 296.0 L704.1 514.8M703.1 296.6 L708.3 515.7M707.5 297.1 L712.5 516.6M711.9 297.7 L716.7 517.5M716.3 298.2 L720.9 518.4M720.8 298.8 L725.1 519.2M725.2 299.4 L729.3 520.1M729.6 299.9 L733.5 521.0" stroke="#1e242d" stroke-width="0.9" opacity=".55" fill="none"/>
</g></g>
<polygon points="681,293.75 733.7,283 734,300.5" fill="url(#gTopA)"/>
<polygon points="786.5,287.0 871.3,268.8 874.0,505.0 789.4,546.4" fill="url(#gBr)"/>
<g clip-path="url(#cBr)"><g filter="url(#bl)">
<path d="M786.5 288.9 L871.3 270.6 L871.4 275.3 L786.6 294.1ZM786.7 301.9 L871.5 282.4 L871.5 287.1 L786.7 307.1ZM786.8 314.9 L871.6 294.2 L871.6 298.9 L786.9 320.1ZM787.0 327.9 L871.7 306.0 L871.8 310.7 L787.0 333.0ZM787.1 340.8 L871.9 317.8 L871.9 322.5 L787.2 346.0ZM787.2 353.8 L872.0 329.6 L872.0 334.3 L787.3 359.0ZM787.4 366.8 L872.1 341.4 L872.2 346.2 L787.4 372.0ZM787.5 379.7 L872.3 353.2 L872.3 358.0 L787.6 384.9ZM787.7 392.7 L872.4 365.1 L872.5 369.8 L787.7 397.9ZM787.8 405.7 L872.5 376.9 L872.6 381.6 L787.9 410.9ZM788.0 418.6 L872.7 388.7 L872.7 393.4 L788.0 423.8ZM788.1 431.6 L872.8 400.5 L872.9 405.2 L788.2 436.8ZM788.3 444.6 L872.9 412.3 L873.0 417.0 L788.3 449.8ZM788.4 457.6 L873.1 424.1 L873.1 428.8 L788.5 462.7ZM788.6 470.5 L873.2 435.9 L873.3 440.6 L788.6 475.7ZM788.7 483.5 L873.3 447.7 L873.4 452.4 L788.8 488.7ZM788.8 496.5 L873.5 459.5 L873.5 464.3 L788.9 501.7ZM789.0 509.4 L873.6 471.3 L873.7 476.1 L789.0 514.6ZM789.1 522.4 L873.8 483.2 L873.8 487.9 L789.2 527.6ZM789.3 535.4 L873.9 495.0 L873.9 499.7 L789.3 540.6Z" fill="#14161b50"/>
<path d="M793.6 285.5 L796.4 542.9M800.6 284.0 L803.5 539.5M807.7 282.4 L810.5 536.0M814.8 280.9 L817.6 532.6M821.8 279.4 L824.6 529.1M828.9 277.9 L831.7 525.7M836.0 276.4 L838.8 522.2M843.0 274.9 L845.8 518.8M850.1 273.4 L852.9 515.4M857.2 271.8 L859.9 511.9M864.2 270.3 L867.0 508.4" stroke="#1d2026" stroke-width="0.8" opacity=".5" fill="none"/>
<path d="M789.7 322.9 L802.6 319.7 L802.7 331.0 L789.8 334.4ZM788.8 347.8 L799.9 344.7 L800.0 356.1 L788.9 359.3ZM789.7 394.6 L797.4 392.0 L797.5 403.4 L789.8 406.0ZM789.7 464.6 L801.3 459.9 L801.4 471.3 L789.8 476.1ZM789.6 486.3 L799.9 481.9 L800.0 493.3 L789.7 497.8ZM789.8 510.4 L795.9 507.6 L796.0 519.1 L790.0 521.9Z" fill="#a3936f" opacity=".8"/>
<ellipse cx="793.4" cy="423" rx="2.2" ry="4.6" fill="#e8e0cc" opacity=".9"/>
<path d="M818.4 297.4 L827.8 295 V302.6 L818.4 305 Z" fill="#ccd8e8" opacity=".95"/><path d="M842.2 287 L846 286 V297 L842.2 298 Z" fill="#a4aab8" opacity=".9"/>
</g>
<polygon points="803,318 806,316 806.9,537.8 790.6,546" fill="#1f2229" opacity=".6" filter="url(#bl)"/>
</g>
<polygon points="733.9,281.2 786.5,287.0 790.5,729.8 742.0,714.2" fill="url(#gBf)"/>
<g clip-path="url(#cBf)"><g filter="url(#bl)">
<path d="M734.0 284.8 L786.5 290.7 L786.6 299.5 L734.1 293.5ZM734.4 308.9 L786.8 315.3 L786.8 324.1 L734.6 317.5ZM734.9 332.9 L787.0 339.9 L787.1 348.7 L735.0 341.6ZM735.3 357.0 L787.2 364.5 L787.3 373.3 L735.5 365.6ZM735.8 381.0 L787.4 389.1 L787.5 397.9 L735.9 389.7ZM736.2 405.1 L787.6 413.7 L787.7 422.5 L736.4 413.7ZM736.7 429.1 L787.9 438.3 L787.9 447.1 L736.8 437.8ZM737.1 453.2 L788.1 462.9 L788.2 471.7 L737.3 461.9ZM737.6 477.3 L788.3 487.5 L788.4 496.3 L737.7 485.9ZM738.0 501.3 L788.5 512.1 L788.6 520.9 L738.2 510.0ZM738.5 525.4 L788.8 536.7 L788.8 545.5 L738.6 534.0ZM738.9 549.4 L789.0 561.3 L789.1 570.1 L739.1 558.1ZM739.4 573.5 L789.2 585.9 L789.3 594.7 L739.5 582.1ZM739.8 597.5 L789.4 610.5 L789.5 619.3 L740.0 606.2ZM740.3 621.6 L789.6 635.1 L789.7 643.9 L740.4 630.2ZM740.7 645.6 L789.9 659.7 L789.9 668.5 L740.9 654.3ZM741.2 669.7 L790.1 684.3 L790.2 693.1 L741.3 678.4ZM741.6 693.8 L790.3 708.9 L790.4 717.7 L741.8 702.4Z" fill="#50607528"/>
<path d="M744.9 343.0 L784.0 348.4 L784.1 357.0 L745.0 351.5ZM768.9 369.6 L784.0 371.8 L784.1 380.4 L769.0 378.1ZM755.9 438.2 L784.0 443.3 L784.1 451.9 L756.0 446.7ZM762.9 530.1 L786.0 535.3 L786.1 543.9 L763.0 538.6ZM762.9 551.1 L785.0 556.3 L785.1 564.9 L763.0 559.6ZM741.8 552.6 L785.0 562.9 L785.1 571.5 L742.0 561.0Z" fill="#7f90a4" opacity=".34"/>
<path d="M737.9 317.0 L782.0 322.5 L782.1 331.1 L738.0 325.4ZM742.9 392.6 L782.0 398.9 L782.1 407.5 L743.0 401.0ZM740.9 524.3 L754.0 527.2 L754.1 535.7 L741.0 532.7ZM747.9 606.6 L764.0 610.9 L764.1 619.4 L748.0 615.1ZM744.9 462.0 L784.0 469.5 L784.1 478.1 L745.0 470.4ZM745.9 581.4 L780.0 590.1 L780.1 598.6 L746.0 589.9ZM749.8 630.7 L786.0 640.7 L786.1 649.3 L750.0 639.2Z" fill="#7f90a4" opacity=".18"/>
<path d="M738.3 281.7 L746.0 715.5M742.7 282.2 L750.1 716.8M747.0 282.6 L754.1 718.1M751.4 283.1 L758.2 719.4M755.8 283.6 L762.2 720.7M760.2 284.1 L766.2 722.0M764.6 284.6 L770.3 723.3M769.0 285.1 L774.3 724.6M773.4 285.6 L778.4 725.9M777.7 286.0 L782.4 727.2M782.1 286.5 L786.5 728.5" stroke="#1e242d" stroke-width="0.9" opacity=".5" fill="none"/>
</g></g>
<polygon points="733.9,281.2 819.4,262.8 871.3,268.8 786.5,287" fill="url(#gTopB)"/>
<path d="M777.5 271.9 L829.5 277.7" stroke="#7a7f8a" stroke-width="0.8" opacity=".8"/>
<polygon points="806.0,309.2 857.1,316.0 855.3,548.8 806.9,537.8" fill="url(#gCf)"/>
<polygon points="857.1,316.0 904.2,304.5 899.8,529.2 855.3,548.8" fill="url(#gCr)"/>
<g clip-path="url(#cCf)"><g filter="url(#bl)">
<path d="M806.0 313.0 L857.1 319.9 L857.0 329.2 L806.1 322.2ZM806.1 338.4 L856.9 345.7 L856.8 355.1 L806.2 347.6ZM806.2 363.8 L856.7 371.6 L856.6 380.9 L806.3 373.0ZM806.3 389.2 L856.5 397.5 L856.4 406.8 L806.4 398.4ZM806.4 414.6 L856.3 423.3 L856.2 432.6 L806.5 423.8ZM806.5 440.0 L856.1 449.2 L856.0 458.5 L806.6 449.2ZM806.6 465.4 L855.9 475.0 L855.8 484.4 L806.7 474.6ZM806.7 490.8 L855.7 500.9 L855.6 510.2 L806.8 500.0ZM806.8 516.2 L855.5 526.8 L855.4 536.1 L806.9 525.4Z" fill="#54647a30"/>
<path d="M809.0 319.7 L828.7 322.4 L828.7 331.4 L809.0 328.6ZM809.0 344.0 L815.7 345.0 L815.7 354.0 L809.0 353.0ZM828.7 345.8 L852.0 349.2 L852.0 358.3 L828.7 354.8ZM822.0 369.2 L852.0 373.8 L852.0 382.9 L822.0 378.1ZM813.0 392.2 L828.7 394.8 L828.7 403.8 L813.0 401.2ZM810.0 438.4 L854.0 446.6 L853.9 455.6 L810.0 447.4ZM808.0 478.1 L852.0 486.9 L851.9 496.0 L808.0 487.0Z" fill="#8a9ab0" opacity=".45"/>
<path d="M810.0 415.7 L826.0 418.5 L826.0 427.5 L810.0 424.7ZM810.0 461.4 L852.0 469.6 L851.9 478.6 L810.0 470.4ZM807.3 510.6 L816.0 512.5 L816.0 521.4 L807.3 519.6ZM830.0 503.2 L852.0 507.8 L852.0 516.9 L830.0 512.2Z" fill="#8a9ab0" opacity=".3"/>
<path d="M810.6 309.8 L811.3 538.8M815.3 310.4 L815.7 539.8M819.9 311.1 L820.1 540.8M824.6 311.7 L824.5 541.8M829.2 312.3 L828.9 542.8M833.9 312.9 L833.3 543.8M838.5 313.5 L837.7 544.8M843.2 314.1 L842.1 545.8M847.8 314.8 L846.5 546.8M852.5 315.4 L850.9 547.8" stroke="#1e242d" stroke-width="0.9" opacity=".55" fill="none"/>
</g></g>
<g clip-path="url(#cCr)"><g filter="url(#bl)">
<path d="M857.1 317.9 L904.2 306.4 L904.1 311.6 L857.0 323.4ZM857.0 330.9 L903.9 318.9 L903.8 324.1 L856.9 336.3ZM856.9 343.8 L903.7 331.3 L903.6 336.6 L856.8 349.2ZM856.8 356.7 L903.4 343.8 L903.3 349.1 L856.7 362.2ZM856.7 369.7 L903.2 356.3 L903.1 361.5 L856.6 375.1ZM856.6 382.6 L902.9 368.8 L902.8 374.0 L856.5 388.0ZM856.5 395.5 L902.7 381.3 L902.6 386.5 L856.4 401.0ZM856.4 408.5 L902.5 393.8 L902.3 399.0 L856.3 413.9ZM856.3 421.4 L902.2 406.2 L902.1 411.5 L856.2 426.8ZM856.2 434.3 L902.0 418.7 L901.9 424.0 L856.1 439.7ZM856.1 447.2 L901.7 431.2 L901.6 436.4 L856.0 452.7ZM856.0 460.2 L901.5 443.7 L901.4 448.9 L855.9 465.6ZM855.9 473.1 L901.2 456.2 L901.1 461.4 L855.8 478.5ZM855.8 486.0 L901.0 468.7 L900.9 473.9 L855.7 491.5ZM855.7 499.0 L900.7 481.1 L900.6 486.4 L855.6 504.4ZM855.6 511.9 L900.5 493.6 L900.4 498.9 L855.5 517.3ZM855.5 524.8 L900.3 506.1 L900.1 511.3 L855.4 530.3ZM855.4 537.8 L900.0 518.6 L899.9 523.8 L855.3 543.2Z" fill="#15171c58"/>
<path d="M855.7 502.2 L900.7 484.3 L900.5 495.5 L855.6 513.8ZM855.5 523.1 L900.3 504.5 L899.9 523.6 L855.3 542.9Z" fill="#94835f" opacity=".85"/>
<path d="M861.0 315.0 L859.0 547.1M865.0 314.1 L862.7 545.5M868.9 313.1 L866.4 543.9M872.8 312.2 L870.1 542.2M876.7 311.2 L873.8 540.6M880.7 310.2 L877.5 539.0M884.6 309.3 L881.3 537.3M888.5 308.3 L885.0 535.7M892.4 307.4 L888.7 534.1M896.4 306.4 L892.4 532.5M900.3 305.5 L896.1 530.8" stroke="#2a2b30" stroke-width="0.9" opacity=".55" fill="none"/>
<rect x="873" y="463" width="3" height="4" fill="#b02020"/><rect x="880" y="461" width="3" height="5" fill="#d8d8d8"/><rect x="890" y="455" width="3" height="6" fill="#d9c9a8"/><rect x="864" y="466" width="2.5" height="5" fill="#c8c8c8"/>
<rect x="876" y="344" width="4" height="3" fill="#9a8a5c" transform="rotate(-14 878 345)"/>
</g></g>
<polygon points="806,309.2 853.8,299.1 904.2,304.5 857.1,316" fill="url(#gTopC)"/>
<ellipse cx="866" cy="307" rx="10" ry="2.2" fill="#5d6370" opacity=".8" filter="url(#bl)"/>
</g>
<path d="M679.1 695.5 L673.3 516.7 L687.3 511.2 L681.0 293.8 L733.7 283.0" stroke="#000" stroke-width="1.6" fill="none" stroke-linejoin="round" stroke-linecap="round"/>
<path d="M733.9 300.0 L733.9 281.2 L819.4 262.8 L871.3 268.8 L871.4 298.8" stroke="#000" stroke-width="1.6" fill="none" stroke-linejoin="round" stroke-linecap="round"/>
<path d="M853.8 299.1 L904.2 304.5 L899.8 529.2" stroke="#000" stroke-width="1.6" fill="none" stroke-linejoin="round" stroke-linecap="round"/>
<path d="M901.4 519.8 L953.0 530.8 L949.0 713.4 L876.4 761.1 L679.1 695.5" stroke="#000" stroke-width="1.6" fill="none" stroke-linejoin="round" stroke-linecap="round"/>
<path d="M806.9 537.8 L806.0 309.2 L853.8 299.1" stroke="#000" stroke-width="1.6" fill="none" stroke-linejoin="round" stroke-linecap="round"/>
<path d="M681.0 293.8 L734.0 300.5" stroke="#000" stroke-width="1.0" fill="none" stroke-linejoin="round" stroke-linecap="round"/>
<path d="M733.9 281.2 L742.0 714.2 L790.5 729.8" stroke="#000" stroke-width="1.6" fill="none" stroke-linejoin="round" stroke-linecap="round"/>
<path d="M733.9 281.2 L786.5 287.0 L871.3 268.8" stroke="#000" stroke-width="1.0" fill="none" stroke-linejoin="round" stroke-linecap="round"/>
<path d="M786.5 287.0 L790.5 729.8" stroke="#000" stroke-width="1.5" fill="none" stroke-linejoin="round" stroke-linecap="round"/>
<path d="M806.0 309.2 L857.1 316.0 L904.2 304.5" stroke="#000" stroke-width="1.0" fill="none" stroke-linejoin="round" stroke-linecap="round"/>
<path d="M857.1 316.0 L855.3 548.8" stroke="#000" stroke-width="1.4" fill="none" stroke-linejoin="round" stroke-linecap="round"/>
<path d="M806.9 537.8 L855.3 548.8 L899.8 529.2" stroke="#000" stroke-width="1.4" fill="none" stroke-linejoin="round" stroke-linecap="round"/>
<path d="M673.3 516.7 L737.7 532.3" stroke="#000" stroke-width="1.0" fill="none" stroke-linejoin="round" stroke-linecap="round"/>
<path d="M687.3 511.2 L737.7 521.9" stroke="#000" stroke-width="1.0" fill="none" stroke-linejoin="round" stroke-linecap="round"/>
<path d="M789.4 546.4 L878.8 566.7 L953.0 530.8" stroke="#000" stroke-width="1.3" fill="none" stroke-linejoin="round" stroke-linecap="round"/>
<path d="M789.4 546.4 L806.9 537.8" stroke="#000" stroke-width="1.0" fill="none" stroke-linejoin="round" stroke-linecap="round"/>
<path d="M878.8 566.7 L876.4 761.1" stroke="#000" stroke-width="1.4" fill="none" stroke-linejoin="round" stroke-linecap="round"/>
<path d="M679.2 695.4 L876.4 761.1" stroke="#d01018" stroke-width="1" stroke-dasharray="1 3.2" fill="none"/>
<path d="M672.9 506 L679.2 695.4" stroke="#1010c8" stroke-width="1.5" fill="none"/>
</svg>

<div class="abs" style="left:0;top:0;width:1645px;height:3px;background:linear-gradient(#a2a2a2 0,#6a6a6a 55%,#8e8e8c 75%,#c4c4bf 100%)"></div>
<div class="abs" style="left:0;top:0;width:2px;height:931px;background:linear-gradient(90deg,#9c9c9c,#707070)"></div>
<div class="abs" style="left:1643px;top:0;width:2px;height:931px;background:#fdfdfd"></div>
<div class="abs" style="left:0;top:930px;width:1645px;height:1px;background:#fff"></div>
</div>
<!-- TRAY -->
<div class="abs" style="left:1649px;top:81px;width:271px;height:18px;background:linear-gradient(#bccbdc 0,#c6d3e2 40%,#d9e4f0 100%)">
  <span class="t" id="trh" style="letter-spacing:-0.428px;left:4px;top:4px;color:#08000c;">Default Tray</span>
  <svg style="left:238.6px;top:6px" width="7.6" height="9.3" viewBox="0 0 9 11"><path d="M2 0.5 H7 M2.5 0.5 V5 M6 0 V5.5 M5.4 0.5 V5 M0.5 5.5 H8.5 M4.5 5.5 V10" stroke="#000" stroke-width="1.2" fill="none"/></svg>
  <div class="abs" style="left:255px;top:4px;width:12px;height:12px;background:#c75050">
    <svg style="left:3.3px;top:3.3px" width="5.4" height="5.4" viewBox="0 0 6 6"><path d="M0.4 0.4 L5.6 5.6 M5.6 0.4 L0.4 5.6" stroke="#fff" stroke-width="1.8"/></svg>
  </div>
</div>
<div class="bar" style="top:101px"><i class="tri-r"></i><span class="t" id="b1" style="letter-spacing:0.023px;">Entity Info</span><b class="x"><svg width="7" height="6" viewBox="0 0 7 6"><path d="M1 0.8 L6 5.2 M6 0.8 L1 5.2" stroke="#000" stroke-width="1.15"/></svg></b></div>
<div class="bar" style="top:120px"><i class="tri-d"></i><span class="t" id="b2" style="letter-spacing:-0.073px;">Materials</span><b class="x"><svg width="7" height="6" viewBox="0 0 7 6"><path d="M1 0.8 L6 5.2 M6 0.8 L1 5.2" stroke="#000" stroke-width="1.15"/></svg></b></div>
<div class="abs" style="left:1651px;top:140px;width:64px;height:69px;border:1px solid #9e9e9e;background:#f6f6f6;">
  <svg style="left:0px;top:1.4px" width="64" height="64" viewBox="0 0 64 64"><rect width="64" height="64" fill="#fff"/><path d="M0 0 L64 64 L0 64 Z" fill="#a1b0bb"/></svg>
</div>
<div class="abs" style="left:1720px;top:140px;width:171px;height:19.5px;background:#f0f0f0;border-top:1px solid #6a6a6a;border-left:1px solid #707070;border-right:1px solid #fdfdfd;border-bottom:1px solid #fdfdfd;box-sizing:border-box;box-shadow:inset 1px 1px 0 #9a9a9a,inset -1px -1px 0 #e3e3e3;">
  <span class="t" id="mdef" style="letter-spacing:0.173px;left:4px;top:2px;color:#6d6d86;font-size:11px;">Default</span>
</div>
<svg style="left:1902px;top:142px" width="11" height="16" viewBox="0 0 11 16">
  <rect x="0" y="0" width="11" height="16" fill="#fff" stroke="#d0d0d0" stroke-width="0.6"/>
  <path d="M1.8 1.6 H9.2 L5.5 5.6 Z" fill="#000"/>
  <rect x="0" y="7" width="11" height="9" fill="#000"/>
  <path d="M5.5 8.6 V14.2 M2.7 11.4 H8.3" stroke="#fff" stroke-width="1.5"/>
</svg>
<svg style="left:1896px;top:164px" width="20" height="21" viewBox="0 0 20 21">
  <path d="M3 5 L9.5 1 L19 4.2 L18.6 12.6 L11.2 19.4 L3.2 15.6 Z" fill="#14120e"/>
  <path d="M4.6 5.4 L9.8 2.4 L12 3.2 L6.8 6.4 Z M9.6 7.2 L14.4 4 L17 4.8 L12.2 8.2 Z" fill="#e9dfa7"/>
  <path d="M3.6 8.6 L11.2 11.4 L11.2 13 L3.6 10.2 Z M12.6 11 L18.4 6.6 L18.4 8 L12.6 12.6 Z M12.6 15 L18.4 10.2 L18.4 11.4 L12.6 16.4 Z" fill="#8f8659"/>
  <circle cx="6.2" cy="14.6" r="4.7" fill="#fff" stroke="#000" stroke-width="1.1"/>
  <path d="M6.2 11.6 V17.6 M3.2 14.6 H9.2" stroke="#000" stroke-width="1.2"/>
</svg>
<svg style="left:1896px;top:188px" width="22" height="22" viewBox="0 0 22 22"><rect width="22" height="22" fill="#fff"/><path d="M0 0 L22 22 L0 22 Z" fill="#a1b0bb"/></svg>
<div class="abs" style="left:1649px;top:213px;width:271px;height:1px;background:#a0a0a0"></div>
<div class="abs" style="left:1649px;top:214px;width:271px;height:1px;background:#fff"></div>
<div class="abs" style="left:1649px;top:240px;width:271px;height:1px;background:#fff"></div>
<div class="abs" style="left:1649px;top:219px;width:44px;height:22px;background:#f0f0f0;border-top:1px solid #fff;border-left:1px solid #fff;border-right:1px solid #646464;box-shadow:inset -1px 0 0 #a0a0a0;box-sizing:border-box;border-radius:2px 2px 0 0;"></div>
<div class="abs" style="left:1693px;top:221px;width:41px;height:19px;background:#f0f0f0;border-top:1px solid #fff;border-right:1px solid #646464;box-shadow:inset -1px 0 0 #a0a0a0;box-sizing:border-box;border-radius:0 2px 0 0;"></div>
<span class="t" id="tb1" style="letter-spacing:-0.156px;left:1655px;top:222px;color:#08000c;font-size:11px;">Select</span>
<span class="t" id="tb2" style="letter-spacing:0.010px;left:1697px;top:224px;color:#08000c;font-size:11px;">Edit</span>
<svg style="left:1896px;top:217px" width="20" height="20" viewBox="0 0 20 20">
  <path d="M1.5 18.5 L3 15 L11 7 L13 9 L5 17 Z" fill="#d9a520" stroke="#3a3a3a" stroke-width="0.9"/>
  <path d="M9.6 6.4 L13.6 10.4" stroke="#222" stroke-width="1.8"/>
  <path d="M11.6 7 L15.2 3.2 a2.2 2.2 0 0 1 3 3 L14.4 9.6 Z" fill="#4a4a4a" stroke="#222" stroke-width="0.6"/>
</svg>
<svg style="left:1656px;top:247px" width="66" height="18" viewBox="0 0 66 18">
  <path d="M1.4 8 L7.6 1.8 V5.4 H12.6 V10.6 H7.6 V14.2 Z" fill="#fff" stroke="#000" stroke-width="1.3" stroke-linejoin="miter"/>
  <path d="M36.6 8 L30.4 1.8 V5.4 H25.4 V10.6 H30.4 V14.2 Z" fill="#f4f4f4" stroke="#a8a8a8" stroke-width="1.3"/>
  <path d="M47 9 L55 1.4 L63 9" fill="none" stroke="#000" stroke-width="1.5"/>
  <path d="M49.4 7.4 V15.6 H60.6 V7.4" fill="#fff" stroke="#000" stroke-width="1.5"/>
  <path d="M50.6 1 V4.6" stroke="#000" stroke-width="1.2"/>
  <rect x="53" y="9.6" width="4.2" height="6" fill="#000"/>
</svg>
<div class="abs" style="left:1724px;top:247px;width:168px;height:23px;background:#fff;border-top:2px solid #6a6a6a;border-left:2px solid #7a7a7a;border-right:1px solid #f8f8f8;border-bottom:1px solid #f8f8f8;box-sizing:border-box;">
  <span class="t" id="inm" style="letter-spacing:-0.158px;left:3px;top:3px;color:#08000c;font-size:11px;">In Model</span>
  <div class="abs" style="left:149px;top:0px;width:16px;height:20px;background:#f0f0f0;border-left:1px solid #fff;border-top:1px solid #fff;border-right:2px solid #8a8a8a;border-bottom:2px solid #8a8a8a;box-sizing:border-box;">
    <i class="abs" style="left:3px;top:7px;width:0;height:0;border-left:3.5px solid transparent;border-right:3.5px solid transparent;border-top:4px solid #000"></i>
  </div>
</div>
<svg style="left:1900px;top:247px" width="16" height="18" viewBox="0 0 16 18">
  <path d="M6 1 L14.6 8.4 L6 15.8 Z" fill="#000"/>
  <rect x="0.5" y="3" width="7" height="10.6" fill="#fff" stroke="#1a4fb0" stroke-width="1"/>
  <rect x="0.5" y="3" width="7" height="2.4" fill="#2a62c8"/>
  <path d="M2 7.6 H6 M2 9.6 H6 M2 11.6 H6" stroke="#555" stroke-width="0.8"/>
</svg>
<div class="abs" style="left:1649px;top:271px;width:271px;height:1px;background:#9c9c9c"></div>
<div class="abs" style="left:1649px;top:272px;width:255px;height:119px;background:#fff;overflow:hidden;">
<div class="sw" style="left:4px;top:2px;background:#1b212b"><svg width="46" height="46" viewBox="0 0 46 46" style="left:0;top:0">
<rect width="46" height="46" fill="#1b212b"/>
<rect x="0" y="0" width="46" height="30" fill="#262d39"/>
<rect x="14" y="2" width="8" height="26" fill="#2f3745"/><rect x="30" y="4" width="10" height="24" fill="#2c3340"/>
<rect x="2" y="2" width="6" height="3" fill="#a8aeb4"/><rect x="11" y="1" width="5" height="3" fill="#9ea4ab"/>
<rect x="6" y="16" width="5" height="4" fill="#8f8466"/><rect x="27" y="15" width="5" height="7" fill="#e8d9b0"/><rect x="28" y="22" width="6" height="5" fill="#8f8466"/>
<rect x="36" y="14" width="4" height="5" fill="#4f5a68"/>
<path d="M0 30 H6 V22 H9 V30 H32 V28 H42 V38 H46 V46 H0 Z" fill="#000"/>
<rect x="33" y="28" width="8" height="14" fill="#343b48"/><rect x="34" y="36" width="4" height="6" fill="#8c8470"/>
</svg><i></i></div>
<div class="sw" style="left:56px;top:2px;background:#000"><svg width="46" height="46" viewBox="0 0 46 46" style="left:0;top:0">
<rect width="46" height="46" fill="#000"/>
<path d="M5 0 H44 V14 H39 V22 H22 V26 H5 Z" fill="#2a3140"/>
<rect x="6" y="10" width="36" height="3" fill="#5e6a4c"/>
<rect x="22" y="14" width="4" height="8" fill="#e6e6e6"/><rect x="28" y="14" width="5" height="4" fill="#dcdcdc"/><rect x="37" y="15" width="3" height="5" fill="#e0e0e0"/>
<rect x="0" y="35" width="17" height="9" fill="#3f4856"/><rect x="1" y="39" width="5" height="5" fill="#b4a88c"/><rect x="10" y="39" width="6" height="5" fill="#c9bc9c"/>
</svg><i></i></div>
<div class="sw" style="left:108px;top:2px;background:#494d4c"><i></i></div>
<div class="sw" style="left:160px;top:2px;background:#70654a"><i></i></div>
<div class="sw" style="left:4px;top:54px;background:#262433"><i></i></div>
<div class="sw" style="left:56px;top:54px;background:#1a1a1a"><i></i></div>
<div class="sw" style="left:108px;top:54px;background:#7d7877"><i></i></div>
<div class="sw" style="left:160px;top:54px;background:#c2a674"><i></i></div>
<div class="sw" style="left:4px;top:106px;background:#c4c4c4"><i></i></div>
<div class="sw" style="left:56px;top:106px;background:#000000"><i></i></div>
<div class="sw" style="left:108px;top:106px;background:#931e17"><i></i></div>
<div class="sw" style="left:160px;top:106px;background:#2b2b2b"><i></i></div>
</div>
<div class="abs" style="left:1904px;top:272px;width:16px;height:119px;background:#f0f0f0">
  <svg style="left:3px;top:5px" width="10" height="7" viewBox="0 0 10 7"><path d="M1 5.6 L5 1.6 L9 5.6" fill="none" stroke="#555" stroke-width="1.6"/></svg>
  <div class="abs" style="left:0;top:16px;width:15px;height:17px;background:#cdcdcd"></div>
  <svg style="left:3px;top:107px" width="10" height="7" viewBox="0 0 10 7"><path d="M1 1.4 L5 5.4 L9 1.4" fill="none" stroke="#555" stroke-width="1.6"/></svg>
</div>
<div class="abs" style="left:1649px;top:391px;width:271px;height:1px;background:#fdfdfd"></div>
<div class="abs" style="left:1649px;top:392px;width:271px;height:3px;background:linear-gradient(#c8c8c8,#787878 55%,#a0a0a0)"></div>
<div class="bar" style="top:398px"><i class="tri-r"></i><span class="t" id="b3" style="letter-spacing:0.106px;">Components</span><b class="x"><svg width="7" height="6" viewBox="0 0 7 6"><path d="M1 0.8 L6 5.2 M6 0.8 L1 5.2" stroke="#000" stroke-width="1.15"/></svg></b></div>
<div class="bar" style="top:417px"><i class="tri-r"></i><span class="t" id="b4" style="letter-spacing:-0.537px;">Styles</span><b class="x"><svg width="7" height="6" viewBox="0 0 7 6"><path d="M1 0.8 L6 5.2 M6 0.8 L1 5.2" stroke="#000" stroke-width="1.15"/></svg></b></div>
<div class="bar" style="top:436px"><i class="tri-r"></i><span class="t" id="b5" style="letter-spacing:-0.379px;">Shadows</span><b class="x"><svg width="7" height="6" viewBox="0 0 7 6"><path d="M1 0.8 L6 5.2 M6 0.8 L1 5.2" stroke="#000" stroke-width="1.15"/></svg></b></div>
<div class="bar" style="top:455px"><i class="tri-d"></i><span class="t" id="b6" style="letter-spacing:0.109px;">Instructor</span><b class="x"><svg width="7" height="6" viewBox="0 0 7 6"><path d="M1 0.8 L6 5.2 M6 0.8 L1 5.2" stroke="#000" stroke-width="1.15"/></svg></b></div>
<div class="abs" style="left:1649px;top:473px;width:254px;height:498px;background:#fff"></div>
<div class="abs" style="left:1903px;top:473px;width:17px;height:498px;background:#f0f0f0">
  <svg style="left:4.6px;top:6.6px" width="8" height="5" viewBox="0 0 8 5"><path d="M0 4.6 L3.8 0.2 L7.6 4.6 Z" fill="#a3a3a3"/></svg>
  <div class="abs" style="left:2px;top:17px;width:13px;height:461px;background:#c1c1c1"></div>
  <svg style="left:4.6px;top:487px" width="8" height="5" viewBox="0 0 8 5"><path d="M0 0.2 L3.8 4.6 L7.6 0.2 Z" fill="#505050"/></svg>
</div>
<div class="abs" style="left:1649px;top:972px;width:271px;height:5px;border:1px solid #b2b2b2;background:#f4f4f4;box-sizing:border-box"></div>
<div class="abs" style="left:1649px;top:977px;width:271px;height:35px;background:#f3f6fb"></div>
<svg style="left:1649px;top:474px" width="255" height="190" viewBox="1649 474 255 190">
  <g fill="none" stroke="#000" stroke-linejoin="round" stroke-linecap="round">
    <path d="M1727.8 527.4 L1852 520 L1874.4 551.4 L1874 585 L1866 586.4" stroke-width="1.7"/>
    <path d="M1727.8 527.4 L1716.6 552.6 L1718 584.2 L1745.6 607.6 L1795.4 598.6 L1822.4 613.4 L1864.6 604.2 L1864.8 565.6 L1845 545 L1802 534.6" stroke-width="1.7"/>
    <path d="M1744 567 L1745.6 607.6 M1744 567 L1795.2 561.6 L1795.4 598.6 M1795.2 561.6 L1802 534.6 M1795.2 561.6 L1822 571.4 L1822.4 613.4 M1822 571.4 L1864.8 565.6 M1822 571.4 L1845 545 M1856.6 554 L1874.4 551.4" stroke-width="1"/>
    <path d="M1727.8 527.4 L1744 567" stroke="#1a2eb0" stroke-width="1.7"/>
  </g>
  <path d="M1758.4 548.4 L1758.4 562.4 L1761.6 559.4 L1764 565 L1766 564 L1763.8 558.6 L1768 558.4 Z" fill="#000" stroke="#e8e8e8" stroke-width="0.7"/>
</svg>
<span class="insb" id="i0" style="letter-spacing:0.531px;left:1675px;top:669px;font-size:18px;line-height:20px;color:#000;">Select Tool</span>
<span class="ins" id="i1" style="letter-spacing:0.011px;left:1678px;top:688px;">Select entities to modify when</span>
<span class="ins" id="i2" style="letter-spacing:-0.103px;left:1678px;top:704px;">using other tools or commands.</span>
<span class="ins" id="i3" style="letter-spacing:-0.052px;left:1680px;top:749px;">1. Click on an entity.</span>
<span class="ins" id="i4" style="letter-spacing:0.077px;left:1678px;top:793px;">Ctrl = Add an entity to set of</span>
<span class="ins" id="i5" style="letter-spacing:-0.046px;left:1678px;top:809px;">selected entities</span>
<span class="ins" id="i6" style="letter-spacing:0.040px;left:1678px;top:825px;">Shift+Ctrl = Subtract an entity</span>
<span class="ins" id="i7" style="letter-spacing:0.027px;left:1678px;top:841px;">from set of selected entities</span>
<span class="ins" id="i8" style="letter-spacing:0.011px;left:1678px;top:857px;">Shift = Toggle whether an entity is</span>
<span class="ins" id="i9" style="letter-spacing:0.024px;left:1678px;top:873px;">within set of selected entities</span>
<span class="ins" id="i10" style="letter-spacing:0.032px;left:1678px;top:889px;">Ctrl+A = Select all visible entities</span>
<span class="ins" id="i11" style="letter-spacing:0.037px;left:1678px;top:905px;">in model</span>
<span class="insb" id="h1" style="letter-spacing:0.686px;left:1676px;top:734px;">Tool Operation</span>
<span class="insb" id="h2" style="letter-spacing:0.671px;left:1675px;top:777px;">Modifier Keys</span>
<span class="insb" id="h3" style="letter-spacing:0.669px;left:1675px;top:934px;">Click to learn about more</span>
<span class="insb" id="h4" style="letter-spacing:0.735px;left:1675px;top:950px;">advanced operations...</span>

</body>
</html>
